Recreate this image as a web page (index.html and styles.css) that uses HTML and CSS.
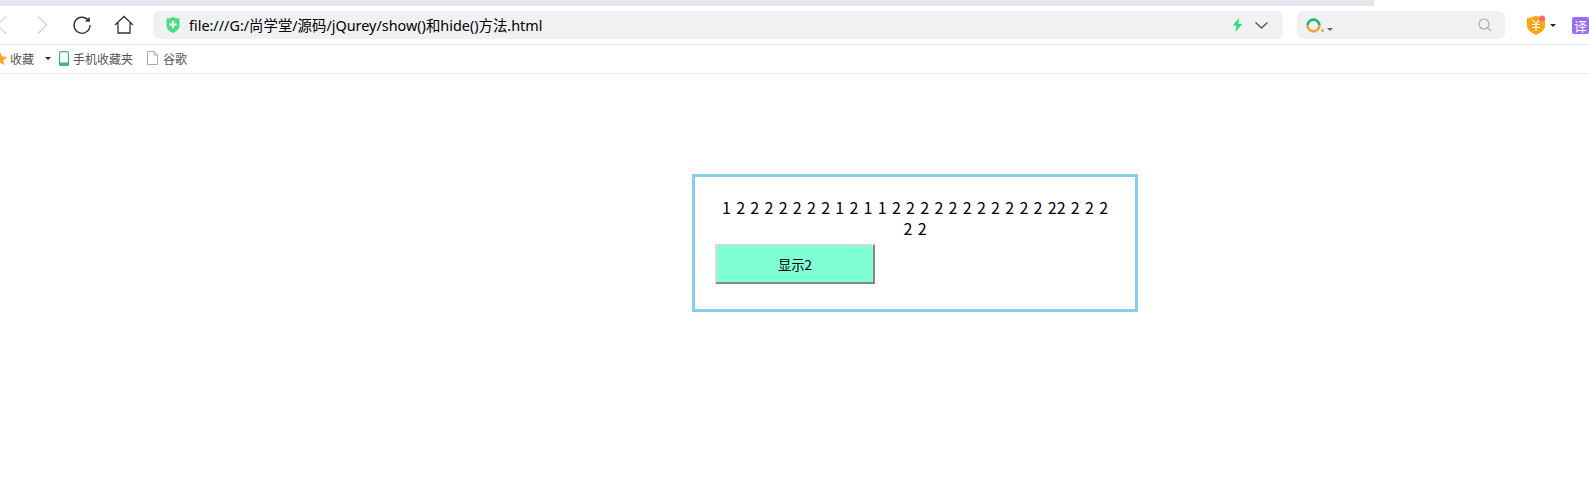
FILE: index.html
```html
<!DOCTYPE html>
<html lang="zh-CN">

<head>
  <meta charset="UTF-8" />
  <title>show()和hide()方法</title>
  <link rel="stylesheet" href="styles.css">
</head>

<body>

  <div class="tab-strip"></div>

  <div class="toolbar">
    <svg class="nav-back" width="6" height="20" viewBox="0 0 6 20"><path d="M6 1.5 L-2.5 10 L6 18.5" fill="none" stroke="#d0d0d0" stroke-width="1.2"/></svg>
    <svg class="nav-forward" width="11" height="20" viewBox="0 0 11 20"><path d="M1 1.5 L9.5 10 L1 18.5" fill="none" stroke="#d0d0d0" stroke-width="1.2"/></svg>
    <svg class="nav-reload" width="20" height="20" viewBox="0 0 20 20"><path d="M16.2 5.2 A8 8 0 1 0 18 10" fill="none" stroke="#333" stroke-width="1.3"/><path d="M13 6.4 L18 6.8 L17.6 2 Z" fill="#333"/></svg>
    <svg class="nav-home" width="20" height="20" viewBox="0 0 20 20"><path d="M1 10 L10 1.5 L19 10 M4 8 V18 H16 V8" fill="none" stroke="#333" stroke-width="1.3"/></svg>

    <div class="address-bar">
      <svg class="shield" width="14" height="16" viewBox="0 0 14 16"><path d="M0.5 1.5 Q4 1.5 7 0 Q10 1.5 13.5 1.5 V9 Q13.5 13 7 16 Q0.5 13 0.5 9 Z" fill="#4fdc85"/><path d="M7 4 V11 M3.5 7.5 H10.5" stroke="#fff" stroke-width="2.2"/></svg>
      <span class="url">file:///G:/尚学堂/源码/jQurey/show()和hide()方法.html</span>
      <svg class="bolt" width="11" height="14" viewBox="0 0 10 13"><path d="M6.5 0 L0.5 7 H4 L3 13 L9.5 5.5 H5.8 Z" fill="#2fdc86"/></svg>
      <svg class="chevron" width="13" height="7" viewBox="0 0 13 7"><path d="M0.5 0.5 L6.5 6 L12.5 0.5" fill="none" stroke="#555" stroke-width="1.3"/></svg>
    </div>

    <div class="search-bar">
      <svg class="engine" width="15" height="15" viewBox="0 0 15 15"><path d="M1.6 7.5 A5.9 5.9 0 0 1 13.4 7.5" fill="none" stroke="#1eb86a" stroke-width="2.6"/><path d="M1.6 7.5 A5.9 5.9 0 0 0 13.4 7.5" fill="none" stroke="#f5a03c" stroke-width="2.6"/></svg>
      <span class="engine-dot"></span>
      <span class="caret caret-grey"></span>
      <svg class="magnifier" width="14" height="14" viewBox="0 0 14 14"><circle cx="6" cy="6" r="5" fill="none" stroke="#aaa" stroke-width="1.2"/><path d="M9.7 9.7 L13 13" stroke="#aaa" stroke-width="1.2"/></svg>
    </div>

    <div class="wallet">
      <svg width="18" height="20" viewBox="0 0 18 20"><path d="M0 3 Q5 3 9 0.5 Q13 3 18 3 V11 Q18 16 9 20 Q0 16 0 11 Z" fill="#ffa70f"/><path d="M5.5 4.5 L9 9 L12.5 4.5 M5 9.5 H13 M5 12.5 H13 M9 9 V16" fill="none" stroke="#fff" stroke-width="1.2"/><circle cx="15" cy="3.5" r="3" fill="#fb6a6a"/></svg>
    </div>
    <span class="caret"></span>
    <div class="translate">译</div>
  </div>

  <div class="bookmarks">
    <svg class="star" width="14" height="13" viewBox="0 0 14 13"><path d="M7 0 L9 4.6 L14 5 L10.2 8.2 L11.4 13 L7 10.4 L2.6 13 L3.8 8.2 L0 5 L5 4.6 Z" fill="#f5a623"/></svg>
    <span class="mark mark-fav">收藏</span>
    <span class="caret"></span>
    <svg class="phone" width="10" height="15" viewBox="0 0 10 15"><rect x="0.6" y="0.6" width="8.8" height="13.8" rx="1" fill="#fff" stroke="#3cba78" stroke-width="1.2"/><rect x="0.6" y="11.5" width="8.8" height="3" fill="#3cba78"/></svg>
    <span class="mark mark-phone">手机收藏夹</span>
    <svg class="doc" width="11" height="14" viewBox="0 0 11 14"><path d="M0.5 0.5 H7 L10.5 4 V13.5 H0.5 Z M7 0.5 V4 H10.5" fill="#fff" stroke="#aaa"/></svg>
    <span class="mark">谷歌</span>
  </div>

  <div class="box">
    <p class="numbers">1 2 2 2 2 2 2 2 1 2 1 1 2 2 2 2 2 2 2 2 2 2 2 22 2 2 2 2 2</p>
    <button class="toggle">显示2</button>
  </div>

</body>

</html>
```

FILE: styles.css
```css
html,
body {
  margin: 0;
  height: 100%;
  overflow: hidden;
}

body {
  font-family: "Noto Sans", "Noto Sans CJK SC", sans-serif;
  background: #fff;
  color: #000;
}

.tab-strip {
  width: 1374px;
  height: 6px;
  background: #e3e6ea;
}

.toolbar {
  display: flex;
  align-items: center;
  height: 38px;
  border-bottom: 1px solid #e8e8e8;
}

.toolbar > * {
  flex-shrink: 0;
}

.nav-back {
  margin-left: 0;
}

.nav-forward {
  margin-left: 31px;
}

.nav-reload {
  margin-left: 24px;
}

.nav-home {
  margin-left: 22px;
}

.address-bar {
  display: flex;
  align-items: center;
  width: 1130px;
  height: 28px;
  margin-left: 19px;
  background: #eff1f3;
  border-radius: 6px;
}

.shield {
  margin-left: 13px;
}

.url {
  margin-left: 9px;
  margin-bottom: 2px;
  font-family: "Noto Sans", "Noto Sans CJK SC", sans-serif;
  font-size: 14.4px;
}

.bolt {
  margin-left: auto;
}

.chevron {
  margin-left: 12px;
  margin-right: 15px;
}

.search-bar {
  display: flex;
  align-items: center;
  width: 208px;
  height: 28px;
  margin-left: 14px;
  background: #eff1f3;
  border-radius: 6px;
}

.engine {
  margin-left: 9px;
}

.engine-dot {
  width: 3px;
  height: 3px;
  margin-top: 10px;
  border-radius: 50%;
  background: #f5a03c;
}

.search-bar .caret {
  margin-left: 3px;
  margin-top: 9px;
}

.magnifier {
  margin-left: auto;
  margin-right: 13px;
}

.caret {
  width: 0;
  height: 0;
  border-left: 3px solid transparent;
  border-right: 3px solid transparent;
  border-top: 3px solid #222;
}

.caret-grey {
  border-top-color: #666;
}

.wallet {
  display: flex;
  margin-left: 22px;
}

.wallet + .caret {
  margin-left: 5px;
}

.translate {
  width: 17px;
  height: 17px;
  margin-left: 16px;
  border-radius: 2px;
  background: #9b6df6;
  color: #fff;
  font-family: "Noto Sans CJK SC", sans-serif;
  font-size: 13px;
  line-height: 17px;
  text-align: center;
}

.bookmarks {
  display: flex;
  align-items: center;
  height: 26px;
  padding-bottom: 2px;
  border-bottom: 1px solid #e8e8e8;
  font-family: "Noto Sans CJK SC", sans-serif;
  font-size: 12px;
  color: #555;
}

.star {
  margin-left: -7px;
}

.mark-fav {
  margin-left: 3px;
}

.bookmarks > .caret {
  margin-left: 11px;
}

.phone {
  margin-left: 8px;
}

.mark-phone {
  margin-left: 4px;
}

.doc {
  margin-left: 14px;
  margin-right: 5px;
}

.box {
  width: 400px;
  margin: 100px 0 0 692px;
  padding: 20px 20px 25px;
  border: 3px solid #87ceeb;
}

.numbers {
  margin: 0;
  font-family: "Noto Sans CJK SC", sans-serif;
  font-size: 16px;
  line-height: 21px;
  word-spacing: 1.7px;
  text-align: center;
}

.toggle {
  display: block;
  width: 160px;
  height: 40px;
  margin-top: 5px;
  border: 2px solid;
  border-color: #d8d8d8 #888 #888 #d8d8d8;
  background: #7fffd4;
  font-family: "Noto Sans CJK SC", sans-serif;
  font-size: 13.33px;
  color: #000;
}
```
